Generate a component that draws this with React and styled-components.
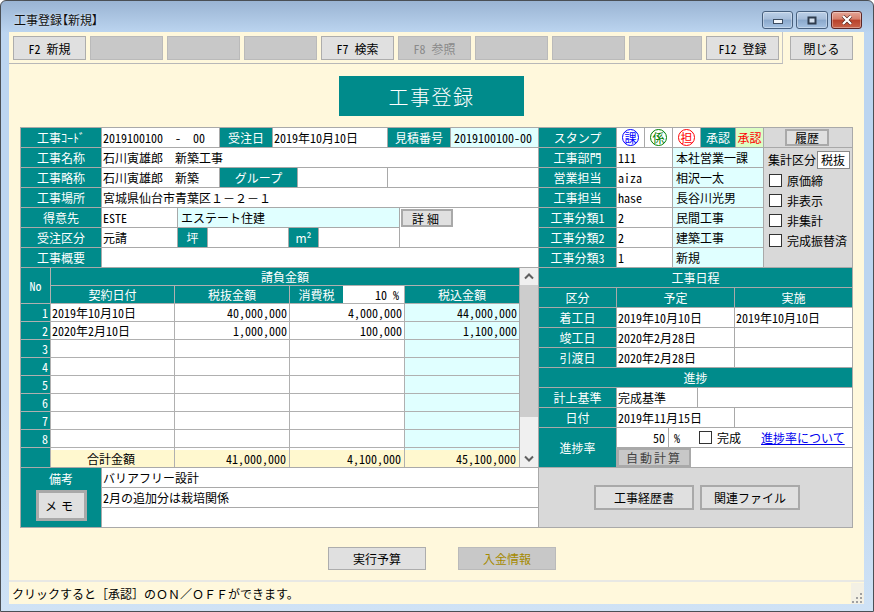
import React from "react";
import styled, { createGlobalStyle } from "styled-components";

const TEAL = "#008b8b";
const CYAN = "#e0ffff";
const LINE = "#a9a9a9";
const CREAM = "#fff8dc";
const PANEL = "#d9d9d9";

const GlobalStyle = createGlobalStyle`
  * { box-sizing: border-box; }
  html, body { margin: 0; padding: 0; background: #fff; }
  body {
    font-family: "Noto Sans CJK JP", "Liberation Sans", sans-serif;
    font-size: 12px;
    font-feature-settings: "hwid";
    color: #000;
  }
`;

const Win = styled.div`
  width: 874px;
  height: 612px;
  display: flex;
  flex-direction: column;
  border: 1px solid #4a4f55;
  border-radius: 6px 6px 0 0;
  background: linear-gradient(#9ab4d3 0, #bcd5f0 32px, #bcd5f0 400px, #cfe2f5 100%);
`;

const TitleBar = styled.div`
  height: 31px;
  flex: none;
  display: flex;
  padding-left: 13px;
`;

const TitleText = styled.div`
  flex: 1;
  padding-top: 11px;
  line-height: 16px;
  font-size: 12px;
  font-feature-settings: "palt";
  color: #111;
  text-shadow: 0 0 3px #e4eefa;
`;

const Caption = styled.div`
  display: flex;
  gap: 3px;
  padding: 10px 11px 0 0;
`;

const CapBtn = styled.div`
  width: ${p => p.$w}px;
  height: 18px;
  display: flex;
  align-items: center;
  justify-content: center;
  border: 1px solid ${p => (p.$close ? "#5c2626" : "#47607e")};
  border-radius: 3px;
  box-shadow: inset 0 0 0 1px rgba(255, 255, 255, 0.35);
  background: ${p =>
    p.$close
      ? "linear-gradient(#e5a596 0, #d67f6b 45%, #b8412a 50%, #c9634a 100%)"
      : "linear-gradient(#bcd0e8 0, #a6bdd9 45%, #8aa8cb 50%, #a6c2e2 100%)"};
`;

const Client = styled.div`
  width: 855px;
  margin: 0 0 7px 8px;
  flex: 1;
  display: flex;
  flex-direction: column;
  background: ${CREAM};
`;

const TopRow = styled.div`
  display: flex;
  height: 32px;
  flex: none;
`;

const FnGroup = styled.div`
  display: flex;
  gap: 4px;
  width: 774px;
  padding: 4px 0 0 4px;
  border-right: 1px solid #c4c4c4;
  border-bottom: 1px solid #b8b8b8;
`;

const FnBtn = styled.div`
  width: ${p => p.$w || 73}px;
  height: ${p => p.$h || 24}px;
  display: flex;
  align-items: center;
  justify-content: center;
  font-size: ${p => p.$fs || 12}px;
  color: ${p => p.$color || "#000"};
  background: ${p => (p.$off ? "#c8c8c8" : "#e0e0e0")};
  border: 1px solid ${p => (p.$off ? "#bababa" : "#adadad")};
`;

const CloseSlot = styled.div`
  padding: 4px 0 0 7px;
`;

const Banner = styled.div`
  width: 185px;
  height: 40px;
  margin: 12px 0 0 330px;
  flex: none;
  display: flex;
  align-items: center;
  justify-content: center;
  background: ${TEAL};
  color: #fff;
  font-size: 20px;
  font-weight: 300;
  letter-spacing: 1.5px;
`;

const Form = styled.div`
  width: 833px;
  height: 401px;
  margin: 11px 0 0 11px;
  flex: none;
  display: flex;
  gap: 1px;
  padding: 1px;
  background: ${LINE};
`;

const Column = styled.div`
  width: ${p => p.$w}px;
  display: flex;
  flex-direction: column;
  gap: 1px;
`;

const Row = styled.div`
  display: flex;
  gap: 1px;
  height: ${p => p.$h || 19}px;
  flex: none;
`;

const Label = styled.div`
  width: ${p => (p.$w ? p.$w + "px" : "auto")};
  flex: ${p => (p.$w ? "none" : 1)};
  display: flex;
  align-items: center;
  justify-content: center;
  background: ${TEAL};
  color: #fff;
  white-space: pre;
  font-feature-settings: ${p => (p.$wide ? "normal" : "inherit")};
`;

const LabelStack = styled.div`
  width: 80px;
  flex: none;
  display: flex;
  flex-direction: column;
  gap: 1px;
`;

const Value = styled.div`
  width: ${p => (p.$w ? p.$w + "px" : "auto")};
  flex: ${p => (p.$w ? "none" : 1)};
  display: flex;
  align-items: center;
  padding: 0 ${p => (p.$right ? 3 : 1)}px 0 ${p => (p.$cyan ? 3 : 1)}px;
  justify-content: ${p => (p.$right ? "flex-end" : "flex-start")};
  background: ${p => (p.$cyan ? CYAN : "#fff")};
  white-space: pre;
  font-feature-settings: ${p => (p.$wide ? "normal" : "inherit")};
`;

const DetailCell = styled.div`
  width: 138px;
  height: 39px;
  padding: 1px 0 0 1px;
  background: #fff;
`;

const SmallBtn = styled.div`
  width: ${p => p.$w}px;
  height: ${p => p.$h}px;
  display: flex;
  align-items: center;
  justify-content: center;
  flex: none;
  background: ${p => (p.$off ? "#c8c8c8" : "#e0e0e0")};
  border: ${p => p.$b || 2}px solid ${LINE};
  letter-spacing: ${p => p.$ls || 0}px;
  color: ${p => (p.$off ? "#444" : "#000")};
`;

const Split = styled.div`
  display: flex;
  gap: 1px;
`;

const Stack = styled.div`
  display: flex;
  flex-direction: column;
  gap: 1px;
`;

const Table = styled.div`
  display: flex;
  gap: 1px;
  height: 199px;
  flex: none;
`;

const Grid = styled.div`
  display: grid;
  grid-template-columns: 29px 123px 114px 114px 114px;
  grid-template-rows: repeat(10, 17px) 19px;
  gap: 1px;
  background: #b0b0b0;
`;

const NoHead = styled(Label)`
  grid-row: span 2;
`;

const WideHead = styled(Label)`
  grid-column: span 4;
`;

const TaxHead = styled.div`
  display: flex;
`;

const TaxRate = styled.div`
  flex: 1;
  display: flex;
  align-items: center;
  justify-content: flex-end;
  padding-right: 5px;
  background: #fff;
  white-space: pre;
`;

const NoCell = styled(Label)`
  justify-content: flex-end;
  padding-right: 2px;
`;

const BodyCell = styled.div`
  display: flex;
  align-items: center;
  justify-content: ${p => (p.$right ? "flex-end" : "flex-start")};
  padding: 0 ${p => (p.$right ? 2 : 0)}px 0 1px;
  background: ${p => (p.$cyan ? CYAN : "#fff")};
`;

const TotalCell = styled.div`
  display: flex;
  align-items: center;
  justify-content: ${p => (p.$right ? "flex-end" : "center")};
  padding: 2px 3px 0 0;
  background: linear-gradient(${p => (p.$cyan ? CYAN : "#fff")} 2px, #fff8cf 2px);
`;

const Scroll = styled.div`
  width: 18px;
  display: flex;
  flex-direction: column;
  background: #f0f0f0;
`;

const ScrollArrow = styled.div`
  height: 17px;
  flex: none;
  display: flex;
  align-items: center;
  justify-content: center;
`;

const ScrollThumb = styled.div`
  height: 132px;
  flex: none;
  background: #cdcdcd;
`;

const ScrollRest = styled.div`
  flex: 1;
`;

const MemoLabel = styled.div`
  width: 80px;
  height: 59px;
  flex: none;
  display: flex;
  flex-direction: column;
  align-items: center;
  padding-top: 2px;
  gap: 3px;
  background: ${TEAL};
  color: #fff;
`;

const MemoLines = styled(Stack)`
  flex: 1;
`;

const Stamp = styled.div`
  width: 27px;
  display: flex;
  align-items: center;
  justify-content: center;
  background: #fff;
`;

const StampRing = styled.span`
  width: 17px;
  height: 17px;
  display: flex;
  align-items: center;
  justify-content: center;
  border: 1px solid ${p => p.$c};
  border-radius: 50%;
  color: ${p => p.$c};
  font-size: 12px;
  line-height: 1;
`;

const Approved = styled.div`
  width: 27px;
  display: flex;
  align-items: center;
  justify-content: center;
  background: #dcffc4;
  color: #f00;
`;

const HistoryCell = styled.div`
  flex: 1;
  padding: 1px 0 0 21px;
  background: ${PANEL};
`;

const InfoBlock = styled.div`
  display: flex;
  gap: 1px;
`;

const SidePanel = styled.div`
  width: 88px;
  padding: 3px 2px 0 4px;
  background: ${PANEL};
`;

const SumRow = styled.div`
  display: flex;
  align-items: center;
  justify-content: space-between;
  height: 17px;
  margin-bottom: 2px;
`;

const SumBox = styled.div`
  width: 33px;
  height: 18px;
  padding-left: 3px;
  display: flex;
  align-items: center;
  background: #fff;
  border: 1px solid #8a8a8a;
`;

const CheckRow = styled.div`
  display: flex;
  align-items: center;
  gap: 5px;
  height: 20px;
  padding-left: 1px;
  white-space: nowrap;
`;

const Box = styled.span`
  width: 13px;
  height: 13px;
  flex: none;
  background: #fff;
  border: 1px solid #333;
`;

const ProgressCell = styled.div`
  flex: 1;
  display: flex;
  align-items: center;
  padding-left: 5px;
  background: #fff;
  white-space: nowrap;
`;

const DoneCheck = styled(CheckRow)`
  margin-left: 19px;
  padding-left: 0;
  flex: none;
`;

const InfoLink = styled.a`
  margin-left: 20px;
  flex: none;
  color: #0000ee;
  text-decoration: underline;
`;

const AutoRow = styled.div`
  display: flex;
  height: 19px;
  flex: none;
  background: #fff;
`;

const ActionArea = styled.div`
  flex: 1;
  display: flex;
  gap: 6px;
  padding: 17px 0 0 55px;
  background: ${PANEL};
`;

const BottomButtons = styled.div`
  display: flex;
  gap: 32px;
  margin: 19px 0 0 319px;
  flex: none;
`;

const StatusBar = styled.div`
  margin-top: 10px;
  flex: 1;
  display: flex;
  border-top: 2px solid #e8e8e4;
  padding-top: 1px;
`;

const StatusText = styled.div`
  flex: 1;
  height: 20px;
  display: flex;
  align-items: center;
  padding-left: 3px;
  font-feature-settings: normal;
`;

const Grip = styled.div`
  width: 13px;
  display: flex;
  align-items: flex-end;
  justify-content: flex-end;
  background: #f3f0e4;
`;

const GroupBtn = ({ children }) => <SmallBtn $w={100} $h={25}>{children}</SmallBtn>;

const fnKeys = ["F2 新規", "", "", "", "F7 検索", "F8 参照", "", "", "", "F12 登録"];

const rows = [
  ["2019年10月10日", "40,000,000", "4,000,000", "44,000,000"],
  ["2020年2月10日", "1,000,000", "100,000", "1,100,000"],
  ["", "", "", ""],
  ["", "", "", ""],
  ["", "", "", ""],
  ["", "", "", ""],
  ["", "", "", ""],
  ["", "", "", ""],
];

const staff = [
  ["工事部門", "111", "本社営業一課"],
  ["営業担当", "aiza", "相沢一太"],
  ["工事担当", "hase", "長谷川光男"],
  ["工事分類1", "2", "民間工事"],
  ["工事分類2", "2", "建築工事"],
  ["工事分類3", "1", "新規"],
];

const schedule = [
  ["着工日", "2019年10月10日", "2019年10月10日"],
  ["竣工日", "2020年2月28日", ""],
  ["引渡日", "2020年2月28日", ""],
];

const Chevron = ({ up }) => (
  <svg width="10" height="7" viewBox="0 0 10 7">
    <path d={up ? "M1 5.5 L5 1.5 L9 5.5" : "M1 1.5 L5 5.5 L9 1.5"} fill="none" stroke="#606060" strokeWidth="2" />
  </svg>
);

const App = () => (
  <Win>
    <GlobalStyle />
    <TitleBar>
      <TitleText>工事登録【新規】</TitleText>
      <Caption>
        <CapBtn $w={31}>
          <svg width="10" height="10" viewBox="0 0 10 10">
            <rect x="0.5" y="4.5" width="9" height="4" fill="#f4f7fb" stroke="#3c4c60" />
          </svg>
        </CapBtn>
        <CapBtn $w={32}>
          <svg width="10" height="9" viewBox="0 0 10 9">
            <rect x="1.5" y="1.5" width="7" height="6" fill="#d4e0ee" stroke="#2e3c4e" strokeWidth="2" />
          </svg>
        </CapBtn>
        <CapBtn $w={31} $close>
          <svg width="12" height="10" viewBox="0 0 12 10">
            <path d="M2 1 L10 9 M10 1 L2 9" stroke="#4a1a12" strokeWidth="3.4" />
            <path d="M2 1 L10 9 M10 1 L2 9" stroke="#fff" strokeWidth="2.4" />
          </svg>
        </CapBtn>
      </Caption>
    </TitleBar>

    <Client>
      <TopRow>
        <FnGroup>
          {fnKeys.map((key, i) => (
            <FnBtn key={i} $off={!key || key === "F8 参照"} $color={key === "F8 参照" ? "#8a8a8a" : "#000"}>
              {key}
            </FnBtn>
          ))}
        </FnGroup>
        <CloseSlot>
          <FnBtn $w={63}>閉じる</FnBtn>
        </CloseSlot>
      </TopRow>

      <Banner>工事登録</Banner>

      <Form>
        <Column $w={517}>
          <Row>
            <Label $w={80}>工事ｺｰﾄﾞ</Label>
            <Value $w={117}>{"2019100100  -  00"}</Value>
            <Label $w={52}>受注日</Label>
            <Value $w={114}>2019年10月10日</Value>
            <Label $w={62}>見積番号</Label>
            <Value $cyan>2019100100-00</Value>
          </Row>
          <Row>
            <Label $w={80}>工事名称</Label>
            <Value $wide>石川寅雄郎　新築工事</Value>
          </Row>
          <Row>
            <Label $w={80}>工事略称</Label>
            <Value $w={117} $wide>石川寅雄郎　新築</Value>
            <Label $w={77}>グループ</Label>
            <Value $w={89} />
            <Value />
          </Row>
          <Row>
            <Label $w={80}>工事場所</Label>
            <Value $wide>宮城県仙台市青葉区１－２－１</Value>
          </Row>
          <Row $h={39}>
            <LabelStack>
              <Row><Label>得意先</Label></Row>
              <Row><Label>受注区分</Label></Row>
            </LabelStack>
            <Stack>
              <Row>
                <Value $w={75}>ESTE</Value>
                <Value $w={221} $cyan>エステート住建</Value>
              </Row>
              <Row>
                <Value $w={75}>元請</Value>
                <Label $w={29}>坪</Label>
                <Value $w={80} />
                <Label $w={29} $wide>m²</Label>
                <Value $w={80} />
              </Row>
            </Stack>
            <DetailCell>
              <SmallBtn $w={52} $h={18} $ls={3}>詳細</SmallBtn>
            </DetailCell>
          </Row>
          <Row>
            <Label $w={80}>工事概要</Label>
            <Value />
          </Row>

          <Table>
            <Grid>
              <NoHead>No</NoHead>
              <WideHead>請負金額</WideHead>
              <Label>契約日付</Label>
              <Label>税抜金額</Label>
              <TaxHead>
                <Label $w={53}>消費税</Label>
                <TaxRate>10 %</TaxRate>
              </TaxHead>
              <Label>税込金額</Label>
              {rows.map((r, i) => (
                <React.Fragment key={i}>
                  <NoCell>{i + 1}</NoCell>
                  <BodyCell>{r[0]}</BodyCell>
                  <BodyCell $right>{r[1]}</BodyCell>
                  <BodyCell $right>{r[2]}</BodyCell>
                  <BodyCell $right $cyan>{r[3]}</BodyCell>
                </React.Fragment>
              ))}
              <NoCell />
              <TotalCell>合計金額</TotalCell>
              <TotalCell $right>41,000,000</TotalCell>
              <TotalCell $right>4,100,000</TotalCell>
              <TotalCell $right $cyan>45,100,000</TotalCell>
            </Grid>
            <Scroll>
              <ScrollArrow><Chevron up /></ScrollArrow>
              <ScrollThumb />
              <ScrollRest />
              <ScrollArrow><Chevron /></ScrollArrow>
            </Scroll>
          </Table>

          <Split>
            <MemoLabel>
              備考
              <SmallBtn $w={51} $h={31} $b={3} $ls={4}>メモ</SmallBtn>
            </MemoLabel>
            <MemoLines>
              <Row><Value>バリアフリー設計</Value></Row>
              <Row><Value>2月の追加分は栽培関係</Value></Row>
              <Row><Value /></Row>
            </MemoLines>
          </Split>
        </Column>

        <Column $w={313}>
          <Row>
            <Label $w={77}>スタンプ</Label>
            <Stamp><StampRing $c="#0000ff">課</StampRing></Stamp>
            <Stamp><StampRing $c="#008000">係</StampRing></Stamp>
            <Stamp><StampRing $c="#ff0000">担</StampRing></Stamp>
            <Label $w={34}>承認</Label>
            <Approved>承認</Approved>
            <HistoryCell>
              <SmallBtn $w={44} $h={17}>履歴</SmallBtn>
            </HistoryCell>
          </Row>
          <InfoBlock>
            <Stack>
              {staff.map(([name, code, text]) => (
                <Row key={name}>
                  <Label $w={77}>{name}</Label>
                  <Value $w={55}>{code}</Value>
                  <Value $w={90} $cyan>{text}</Value>
                </Row>
              ))}
            </Stack>
            <SidePanel>
              <SumRow>
                集計区分
                <SumBox>税抜</SumBox>
              </SumRow>
              {["原価締", "非表示", "非集計", "完成振替済"].map(t => (
                <CheckRow key={t}>
                  <Box />
                  {t}
                </CheckRow>
              ))}
            </SidePanel>
          </InfoBlock>

          <Row><Label>工事日程</Label></Row>
          <Row>
            <Label $w={77}>区分</Label>
            <Label>予定</Label>
            <Label $w={117}>実施</Label>
          </Row>
          {schedule.map(([name, plan, done]) => (
            <Row key={name}>
              <Label $w={77}>{name}</Label>
              <Value $w={117}>{plan}</Value>
              <Value>{done}</Value>
            </Row>
          ))}
          <Row><Label>進捗</Label></Row>
          <Row>
            <Label $w={77}>計上基準</Label>
            <Value $w={80}>完成基準</Value>
            <Value />
          </Row>
          <Row>
            <Label $w={77}>日付</Label>
            <Value $w={117}>2019年11月15日</Value>
            <Value />
          </Row>
          <Row $h={39}>
            <Label $w={77}>進捗率</Label>
            <MemoLines>
              <Row>
                <Value $w={51} $right>50</Value>
                <ProgressCell>
                  %
                  <DoneCheck>
                    <Box />
                    完成
                  </DoneCheck>
                  <InfoLink>進捗率について</InfoLink>
                </ProgressCell>
              </Row>
              <AutoRow>
                <SmallBtn $off $w={74} $h={19} $ls={2}>自動計算</SmallBtn>
              </AutoRow>
            </MemoLines>
          </Row>
          <ActionArea>
            <GroupBtn>工事経歴書</GroupBtn>
            <GroupBtn>関連ファイル</GroupBtn>
          </ActionArea>
        </Column>
      </Form>

      <BottomButtons>
        <FnBtn $w={98} $h={23}>実行予算</FnBtn>
        <FnBtn $w={98} $h={23} $off $color="#a58a00">入金情報</FnBtn>
      </BottomButtons>

      <StatusBar>
        <StatusText>クリックすると［承認］のＯＮ／ＯＦＦができます。</StatusText>
        <Grip>
          <svg width="12" height="11" viewBox="0 0 12 11" fill="#a0a0a0">
            <rect x="8" y="0" width="2" height="2" />
            <rect x="4" y="4" width="2" height="2" />
            <rect x="8" y="4" width="2" height="2" />
            <rect x="0" y="8" width="2" height="2" />
            <rect x="4" y="8" width="2" height="2" />
            <rect x="8" y="8" width="2" height="2" />
          </svg>
        </Grip>
      </StatusBar>
    </Client>
  </Win>
);

export default App;
